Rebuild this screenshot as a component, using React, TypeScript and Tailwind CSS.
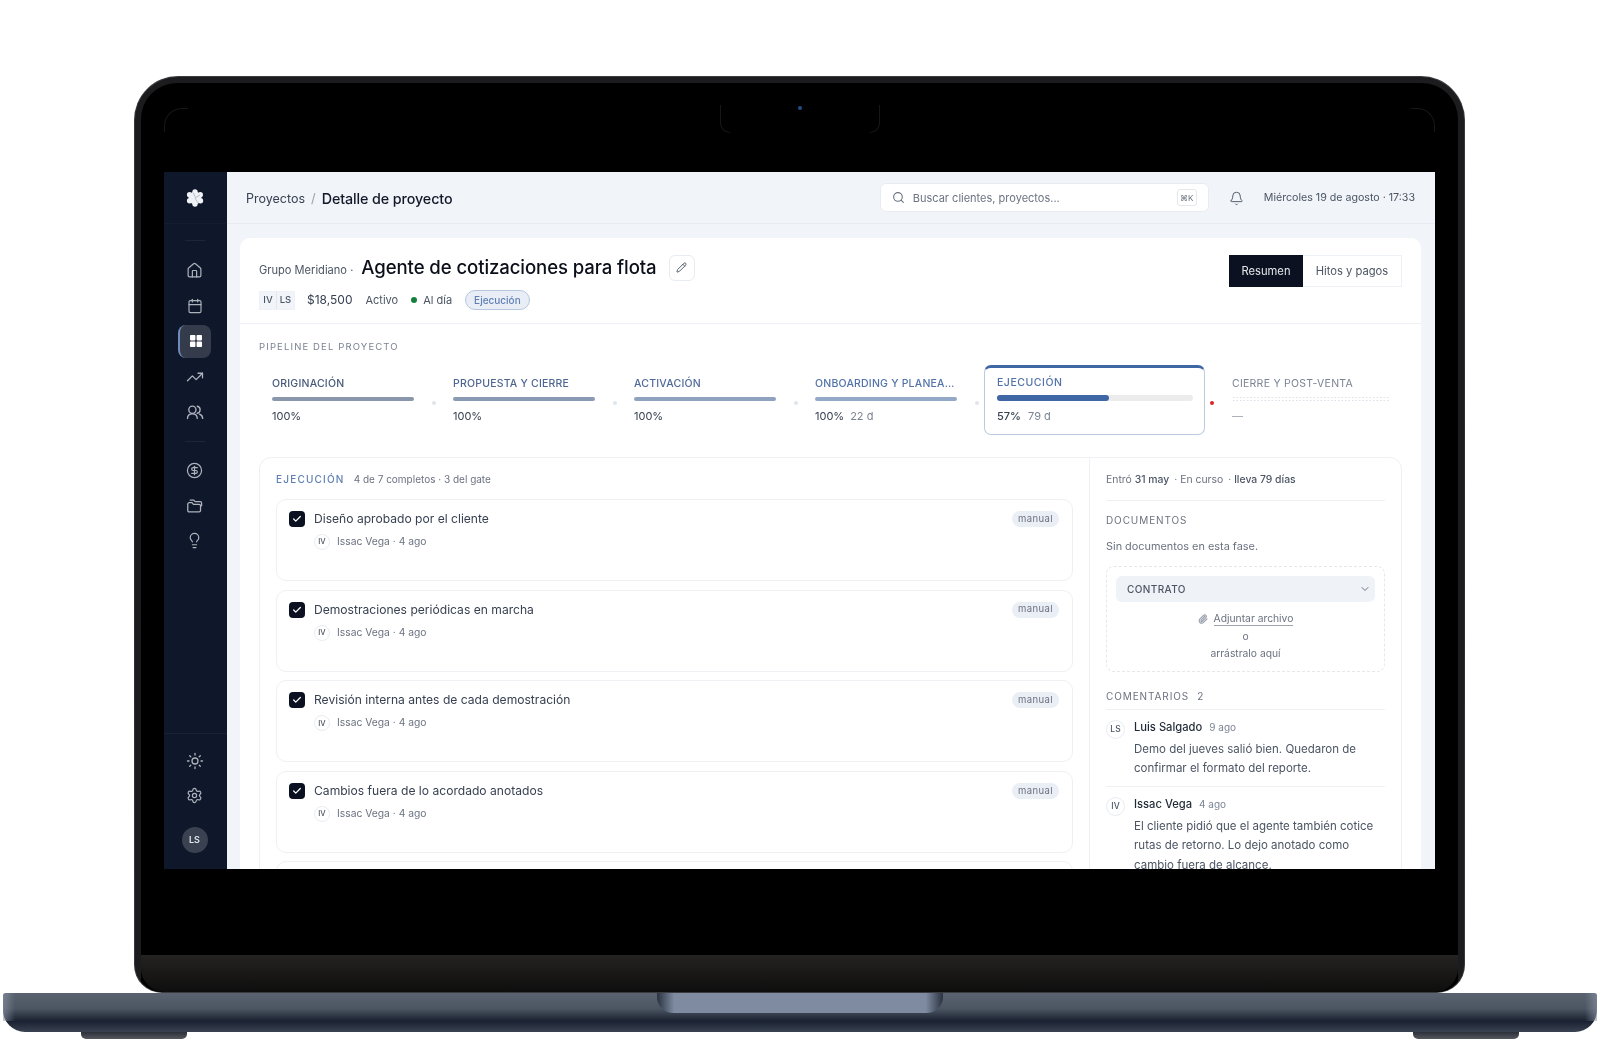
import { House, Calendar, TrendingUp, CircleDollarSign, Lightbulb, Sun, Settings, Bell, Search, Pencil, Paperclip, ChevronDown, Check } from "lucide-react";

function Logo() {
  return (
    <svg width="20" height="20" viewBox="0 0 20 20" fill="#eef1f6">
      <circle cx="10" cy="10" r="6.400" />
      <circle cx="10" cy="3.900" r="2.700" />
      <circle cx="15.300" cy="6.800" r="2.700" />
      <circle cx="15.500" cy="12.800" r="2.700" />
      <circle cx="10" cy="16" r="2.700" />
      <circle cx="4.600" cy="12.800" r="2.700" />
      <circle cx="4.600" cy="6.800" r="2.700" />
      <path d="M8 4.500L10.500 9.500M15 7L10 10M13 15L10 10" stroke="#aab2bf" strokeWidth="0.800" fill="none" />
    </svg>
  );
}

function UsersIcon() {
  return (
    <svg width="18" height="18" viewBox="0 0 24 24" fill="none" stroke="currentColor" strokeWidth="1.800" strokeLinecap="round" strokeLinejoin="round">
      <circle cx="8.500" cy="9" r="4.800" />
      <path d="M2 20.500c0-3.500 2.500-6 6.500-6s6.500 2.500 6.500 6" />
      <path d="M15 4.300a4.800 4.800 0 0 1 0 9.400" />
      <path d="M18 14.800c2.600.9 4.200 3 4.200 5.700" />
    </svg>
  );
}

function FolderIcon() {
  return (
    <svg width="17" height="17" viewBox="0 0 24 24" fill="none" stroke="currentColor" strokeWidth="1.800" strokeLinecap="round" strokeLinejoin="round">
      <path d="M2.500 10a2 2 0 0 1 2-2h4l2 2.500h8a2 2 0 0 1 2 2V19a2 2 0 0 1-2 2h-14a2 2 0 0 1-2-2z" />
      <path d="M6 4.500h5l2 2h7a2 2 0 0 1 2 2v4" />
    </svg>
  );
}

function GridIcon() {
  return (
    <svg width="16" height="16" viewBox="0 0 16 16" fill="#ffffff">
      <rect x="2" y="2" width="5.400" height="5.400" rx="0.800" />
      <rect x="8.600" y="2" width="5.400" height="5.400" rx="0.800" />
      <rect x="2" y="8.600" width="5.400" height="5.400" rx="0.800" />
      <rect x="8.600" y="8.600" width="5.400" height="5.400" rx="0.800" />
    </svg>
  );
}

function NavItem({ children, active }: { children: React.ReactNode; active?: boolean }) {
  return (
    <div
      className={
        active
          ? "flex h-[33px] w-[33px] items-center justify-center rounded-lg border-l-2 border-[#6f8bb8] bg-[#343b4b] text-white"
          : "flex h-[33px] w-[33px] items-center justify-center text-[#aeb3bd]"
      }
    >
      {children}
    </div>
  );
}

function Sidebar() {
  return (
    <aside className="flex h-full w-[63px] shrink-0 flex-col items-center bg-[#0f172a] pr-[2px]">
      <div className="-mr-[2px] flex h-[52px] w-[63px] shrink-0 items-center justify-center border-b border-[#131c31] pr-[2px]">
        <Logo />
      </div>
      <div className="mt-[16px] h-px w-[20px] bg-[#1d2538]" />
      <div className="mt-[13px] flex flex-col items-center gap-[2.400px]">
        <NavItem><House size={17} strokeWidth={1.7} /></NavItem>
        <NavItem><Calendar size={16} strokeWidth={1.7} /></NavItem>
        <NavItem active><GridIcon /></NavItem>
        <NavItem><TrendingUp size={18} strokeWidth={1.7} /></NavItem>
        <NavItem><div className="-mt-[1px]"><UsersIcon /></div></NavItem>
      </div>
      <div className="mt-[12px] h-px w-[20px] bg-[#1d2538]" />
      <div className="mt-[12px] flex flex-col items-center gap-[2.200px]">
        <NavItem><CircleDollarSign size={17} strokeWidth={1.7} /></NavItem>
        <NavItem><FolderIcon /></NavItem>
        <NavItem><Lightbulb size={17} strokeWidth={1.7} /></NavItem>
      </div>
      <div className="-mr-[2px] mt-auto flex w-[63px] flex-col items-center border-t border-[#1a2234] pt-[10px] pr-[2px] pb-[16px]">
        <NavItem><Sun size={18} strokeWidth={1.7} /></NavItem>
        <div className="mt-[2px]"><NavItem><Settings size={17} strokeWidth={1.7} /></NavItem></div>
        <div className="mt-[15px] flex h-[26px] w-[26px] items-center justify-center rounded-full bg-[#3a4150] text-[9px] font-semibold text-[#e5e7eb]">LS</div>
      </div>
    </aside>
  );
}

function Header() {
  return (
    <header className="flex h-[52px] shrink-0 items-center border-b border-[#e7ebf1] bg-[#f1f4f9] pt-[2px] pr-[20px] pl-[19px]">
      <span className="mt-[1px] text-[12.500px] text-[#374151]">Proyectos</span>
      <span className="mx-[6px] text-[13px] text-[#9ca3af]">/</span>
      <span className="text-[14.300px] font-medium tracking-[-0.1px] text-[#111827]">Detalle de proyecto</span>
      <div className="ml-auto -mt-[2px] flex h-[29px] w-[329px] items-center rounded-md border border-[#e8ecf2] bg-white pr-[11px] pl-[11px]">
        <Search size={13} className="text-[#6b7280]" />
        <span className="mt-[1px] ml-[8px] text-[11px] text-[#6b7280]">Buscar clientes, proyectos...</span>
        <span className="ml-auto flex h-[17px] w-[20px] items-center justify-center rounded-[3px] border border-[#e5e7eb] text-[8px] text-[#6b7280]">⌘K</span>
      </div>
      <Bell size={15} strokeWidth={1.5} className="-mt-[1px] ml-[20px] text-[#4b5563]" />
      <span className="-mt-[1px] ml-[20px] text-[10.650px] text-[#4b5563]">Miércoles 19 de agosto · 17:33</span>
    </header>
  );
}

function ProjectHeader() {
  return (
    <div className="flex h-[86px] shrink-0 items-start justify-between border-b border-[#eef1f5] pt-[16px] pr-[19px] pl-[19px]">
      <div>
        <div className="-mt-[1px] flex h-[29px] items-center">
          <span className="mt-[5px] text-[11.100px] text-[#4b5563]">Grupo Meridiano ·</span>
          <span className="ml-[8px] text-[18.600px] font-medium tracking-[-0.1px] text-[#0b0f19]">Agente de cotizaciones para flota</span>
          <span className="ml-[12px] flex h-[26px] w-[26px] items-center justify-center rounded-md border border-[#e8ecf2] text-[#4b5563]">
            <Pencil size={11} />
          </span>
        </div>
        <div className="mt-[8px] flex items-center text-[11px] text-[#4b5563]">
          <span className="flex h-[19px] w-[36px] border border-[#eef1f5] bg-[#f1f4f9] text-[9.500px] font-medium">
            <span className="flex w-1/2 items-center justify-center border-r border-[#e5e7eb]">IV</span>
            <span className="flex w-1/2 items-center justify-center">LS</span>
          </span>
          <span className="ml-[12px] text-[12px] text-[#374151]">$18,500</span>
          <span className="ml-[13px]">Activo</span>
          <span className="ml-[13px] h-[6px] w-[6px] rounded-full bg-[#15803d]" />
          <span className="ml-[6px]">Al día</span>
          <span className="ml-[13px] flex h-[20px] items-center rounded-full border border-[#b7c6e0] bg-[#e8edf6] px-[8px] text-[10px] font-medium text-[#5f7fb3]">Ejecución</span>
        </div>
      </div>
      <div className="mt-[1px] flex h-[32px] text-[11.200px]">
        <span className="flex w-[74px] items-center justify-center bg-[#0b1120] text-[#e5e7eb]">Resumen</span>
        <span className="flex w-[99px] items-center justify-center border border-l-0 border-[#eef1f5] text-[#4b5563]">Hitos y pagos</span>
      </div>
    </div>
  );
}

const doneSteps = [
  { label: "ORIGINACIÓN", labelColor: "text-[#47597a]", bar: "bg-[#8a96ab]", days: "" },
  { label: "PROPUESTA Y CIERRE", labelColor: "text-[#4f6692]", bar: "bg-[#8a9ab5]", days: "" },
  { label: "ACTIVACIÓN", labelColor: "text-[#4f6a9a]", bar: "bg-[#8fa2c0]", days: "" },
  { label: "ONBOARDING Y PLANEA…", labelColor: "text-[#5273aa]", bar: "bg-[#94a8c8]", days: "22 d" },
];

function Pipeline() {
  return (
    <div className="shrink-0 px-[19px]">
      <div className="pt-[16px] text-[9.500px] leading-[14px] tracking-[0.12em] text-[#7b8494]">PIPELINE DEL PROYECTO</div>
      <div className="mt-[11px] flex h-[70px] items-stretch pl-[13px]">
        {doneSteps.map((s) => (
          <div key={s.label} className="contents">
            <div className="w-[142px] shrink-0 pt-[12px]">
              <div className={`text-[10.500px] leading-[14px] font-medium tracking-[0.02em] whitespace-nowrap ${s.labelColor}`}>{s.label}</div>
              <div className={`mt-[6px] h-[4px] rounded-full ${s.bar}`} />
              <div className="mt-[6.500px] text-[11px] leading-[16px] text-[#374151]">
                100%{s.days && <span className="ml-[6px] text-[#7b8494]">{s.days}</span>}
              </div>
            </div>
            {s.days ? (
              <div className="flex w-[27px] shrink-0 items-center pt-[6px]"><span className="ml-[18px] h-[4px] w-[4px] rounded-full bg-[#dfe5ed]" /></div>
            ) : (
              <div className="flex w-[39px] shrink-0 items-center justify-center pt-[6px]"><span className="h-[4px] w-[4px] rounded-full bg-[#dfe5ed]" /></div>
            )}
          </div>
        ))}
        <div className="h-[70px] w-[221px] shrink-0 rounded-[7px] border-[1.500px] border-t-[3px] border-[#bccbe2] border-t-[#3f66a5] pt-[8px] pr-[11px] pl-[12px]">
          <div className="text-[10.500px] leading-[14px] font-medium tracking-[0.05em] text-[#5273aa]">EJECUCIÓN</div>
          <div className="mt-[5px] h-[6px] rounded-full bg-[#ececec]">
            <div className="h-full w-[57%] rounded-full bg-[#3f66a5]" />
          </div>
          <div className="mt-[6.500px] text-[11px] leading-[16px] font-medium text-[#374151]">
            57%<span className="ml-[7px] font-normal text-[#7b8494]">79 d</span>
          </div>
        </div>
        <div className="flex w-[27px] shrink-0 items-center pt-[6px] pl-[5px]"><span className="h-[4px] w-[4px] rounded-full bg-[#dc2626]" /></div>
        <div className="w-[157px] shrink-0 pt-[12px]">
          <div className="text-[10.500px] leading-[14px] tracking-[0.025em] whitespace-nowrap text-[#7b8494]">CIERRE Y POST-VENTA</div>
          <div className="mt-[5px] h-[6px] bg-[radial-gradient(#dfe3e9_1px,transparent_1px)] bg-[length:3.500px_3px]" />
          <div className="mt-[6px] text-[11px] leading-[16px] text-[#a3a9b5]">—</div>
        </div>
      </div>
    </div>
  );
}

const tasks = [
  "Diseño aprobado por el cliente",
  "Demostraciones periódicas en marcha",
  "Revisión interna antes de cada demostración",
  "Cambios fuera de lo acordado anotados",
];

function Avatar({ t, size }: { t: string; size: string }) {
  return (
    <span className={`flex shrink-0 items-center justify-center rounded-full border border-[#e8ecf2] font-medium text-[#4b5563] ${size}`}>{t}</span>
  );
}

function Task({ title }: { title: string }) {
  return (
    <div className="flex h-[82px] shrink-0 items-start rounded-[10px] border border-[#eef0f4] bg-white pt-[10px] pr-[13px] pl-[12px]">
      <span className="mt-[1px] flex h-[16px] w-[16px] shrink-0 items-center justify-center rounded-[4px] bg-[#0b1120] text-white">
        <Check size={10} strokeWidth={3} />
      </span>
      <div className="ml-[9px]">
        <div className="text-[12.100px] leading-[18px] text-[#374151]">{title}</div>
        <div className="mt-[6px] flex items-center">
          <Avatar t="IV" size="h-[16px] w-[16px] text-[7.500px]" />
          <span className="ml-[7px] text-[10.300px] text-[#6b7280]">Issac Vega · 4 ago</span>
        </div>
      </div>
      <span className="mt-[1px] ml-auto flex h-[16px] w-[47px] items-center justify-center rounded-full bg-[#eaeef5] text-[9.500px] tracking-[0.04em] text-[#6b7280]">manual</span>
    </div>
  );
}

function TaskColumn() {
  return (
    <div className="min-w-0 flex-1 pt-[13px] pr-[16px] pl-[16px]">
      <div className="flex h-[16px] items-center">
        <span className="text-[10px] font-medium tracking-[0.12em] text-[#5f7fb3]">EJECUCIÓN</span>
        <span className="ml-[9px] text-[10px] text-[#6b7280]">4 de 7 completos · 3 del gate</span>
      </div>
      <div className="mt-[12px] flex flex-col gap-[8.600px]">
        {tasks.map((t) => <Task key={t} title={t} />)}
        <div className="h-[82px] shrink-0 rounded-[10px] border border-[#eef0f4] bg-white" />
      </div>
    </div>
  );
}

function Comment({ a, name, ago, text }: { a: string; name: string; ago: string; text: string[] }) {
  return (
    <div className="flex">
      <Avatar t={a} size="h-[19px] w-[19px] text-[8.500px] mt-[1px]" />
      <div className="ml-[9px]">
        <div className="flex items-center">
          <span className="text-[11.200px] leading-[17px] font-medium text-[#1f2937]">{name}</span>
          <span className="ml-[7px] text-[10px] text-[#7b8494]">{ago}</span>
        </div>
        <div className="mt-[3.500px] text-[11.500px] leading-[19.500px] whitespace-nowrap text-[#4b5563]">
          {text.map((l) => <div key={l}>{l}</div>)}
        </div>
      </div>
    </div>
  );
}

function SideColumn() {
  return (
    <div className="w-[312px] shrink-0 border-l border-[#eef0f4] px-[16px] pt-[14px]">
      <div className="flex h-[16px] items-center text-[10.400px] text-[#6b7280]">
        Entró<span className="ml-[3px] font-medium text-[#4b5563]">31 may</span>
        <span className="ml-[5px]">· En curso</span>
        <span className="ml-[5px]">·</span><span className="ml-[3px] font-medium text-[#4b5563]">lleva 79 días</span>
      </div>
      <div className="mt-[12px] h-px bg-[#eef0f4]" />
      <div className="mt-[12px] text-[10px] leading-[14px] tracking-[0.09em] text-[#6b7280]">DOCUMENTOS</div>
      <div className="mt-[11px] text-[10.900px] leading-[16px] text-[#6b7280]">Sin documentos en esta fase.</div>
      <div className="mt-[12px] flex h-[106px] flex-col items-center rounded-lg border border-dashed border-[#e5e7eb] px-[9px] pt-[9px]">
        <div className="flex h-[26px] w-full shrink-0 items-center justify-between rounded-md bg-[#eff2f7] pr-[4px] pl-[11px] text-[10px] font-medium tracking-[0.04em] text-[#4b5563]">
          CONTRATO<ChevronDown size={12} className="text-[#6b7280]" />
        </div>
        <div className="mt-[9px] flex items-center text-[10.300px] leading-[16px] text-[#6b7280]">
          <Paperclip size={10} strokeWidth={3} className="mr-[6px] text-[#9ca3af]" />
          <span className="border-b border-[#9ca3af] leading-[14px]">Adjuntar archivo</span>
        </div>
        <div className="mt-[2px] text-[10.300px] leading-[16px] text-[#6b7280]">o</div>
        <div className="mt-[1px] text-[10.300px] leading-[16px] text-[#6b7280]">arrástralo aquí</div>
      </div>
      <div className="mt-[17px] text-[10px] leading-[14px] tracking-[0.09em] text-[#6b7280]">COMENTARIOS<span className="ml-[8px] tracking-normal">2</span></div>
      <div className="mt-[6px] h-px bg-[#eef0f4]" />
      <div className="mt-[9px]">
        <Comment a="LS" name="Luis Salgado" ago="9 ago" text={["Demo del jueves salió bien. Quedaron de", "confirmar el formato del reporte."]} />
      </div>
      <div className="mt-[7.500px] h-px bg-[#eef0f4]" />
      <div className="mt-[9px]">
        <Comment a="IV" name="Issac Vega" ago="4 ago" text={["El cliente pidió que el agente también cotice", "rutas de retorno. Lo dejo anotado como", "cambio fuera de alcance."]} />
      </div>
    </div>
  );
}

function Screen() {
  return (
    <div className="flex h-[697px] w-[1271px] shrink-0 overflow-hidden bg-[#f1f4f9] blur-[0.4px]" style={{ fontFamily: "Inter, 'Noto Sans', sans-serif" }}>
      <Sidebar />
      <main className="flex min-w-0 flex-1 flex-col">
        <Header />
        <div className="min-h-0 flex-1 pt-[14px] pr-[14px] pl-[13px]">
          <div className="flex h-[700px] flex-col rounded-t-[10px] bg-white">
            <ProjectHeader />
            <Pipeline />
            <div className="mx-[19px] mt-[22px] flex h-[500px] shrink-0 rounded-t-[12px] border border-[#eef0f4]">
              <TaskColumn />
              <SideColumn />
            </div>
          </div>
        </div>
      </main>
    </div>
  );
}

export default function App() {
  return (
    <div className="flex h-[1043px] w-full flex-col overflow-hidden bg-white pt-[76px]">
      <div className="relative mr-[135px] ml-[134px] h-[917px] shrink-0 overflow-hidden rounded-t-[44px] rounded-b-[28px] bg-gradient-to-b from-[#3a3b3d] via-[#2a2b2d] to-[#3a3b3e] p-[1px]">
        <div className="flex h-full flex-col overflow-hidden rounded-t-[43px] rounded-b-[27px] bg-[#1c1c1e] px-[6px] pt-[6px]">
          <div className="flex flex-1 flex-col overflow-hidden rounded-t-[36px] bg-black">
            <div className="relative flex h-[89px] shrink-0 justify-center">
              <div className="absolute top-[25px] left-[23px] h-[24px] w-[24px] rounded-tl-[18px] border-t border-l border-[#171717]" />
              <div className="absolute top-[25px] right-[23px] h-[24px] w-[24px] rounded-tr-[18px] border-t border-r border-[#171717]" />
              <div className="mt-[22px] flex h-[28px] w-[160px] justify-between">
                <div className="h-full w-[10px] rounded-bl-[10px] border-b border-l border-[#171717]" />
                <div className="mt-[1px] h-[4px] w-[4px] rounded-full bg-[#1d4f86]" />
                <div className="h-full w-[10px] rounded-br-[10px] border-r border-b border-[#171717]" />
              </div>
            </div>
            <div className="flex justify-center"><Screen /></div>
            <div className="h-[86px] shrink-0" />
            <div className="flex-1 rounded-b-[24px] bg-gradient-to-b from-[#252321] to-[#0e0e0e]" />
          </div>
        </div>
      </div>
      <div className="relative mx-[3px] h-[39px] shrink-0 rounded-t-[3px] rounded-b-[22px] bg-[linear-gradient(to_bottom,#5a636f_0%,#4c5663_40%,#1a2130_72%,#2c3444_88%,#3a4352_100%)]">
        <div className="absolute top-0 left-0 h-[28px] w-[12px] rounded-tl-[3px] bg-gradient-to-r from-[#8c97a8]/60 to-transparent" />
        <div className="absolute top-0 right-0 h-[28px] w-[12px] rounded-tr-[3px] bg-gradient-to-l from-[#8c97a8]/60 to-transparent" />
        <div className="absolute top-0 left-[654px] h-[20px] w-[286px] rounded-b-[16px] bg-[linear-gradient(to_right,#2a3240_0%,#7e8ba0_6%,#7e8ba0_94%,#2a3240_100%)]" />
      </div>
      <div className="flex shrink-0 justify-between px-[81px]">
        <div className="h-[7px] w-[106px] rounded-b-[5px] bg-gradient-to-b from-[#2c3039] to-[#55585e]" />
        <div className="h-[7px] w-[106px] rounded-b-[5px] bg-gradient-to-b from-[#2c3039] to-[#55585e]" />
      </div>
    </div>
  );
}
